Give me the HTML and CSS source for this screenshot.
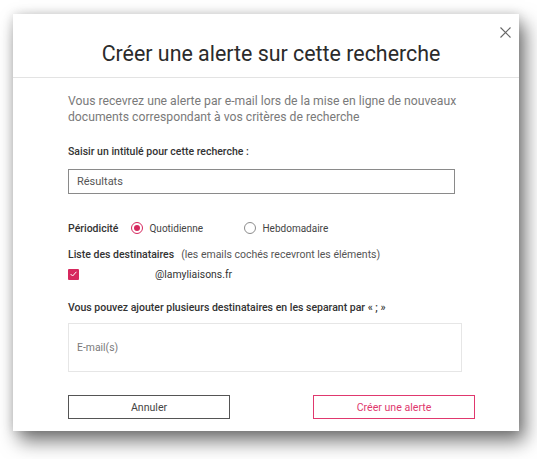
FILE: index.html
```html
<!DOCTYPE html>
<html lang="fr">
<head>
<meta charset="utf-8">
<link rel="stylesheet" href="styles.css">
</head>
<body>
<div class="page">
  <div class="dialog">
    <div class="header">
      <h1 class="title">Créer une alerte sur cette recherche</h1>
      <button class="close" aria-label="Fermer">
        <svg width="11" height="11" viewBox="0 0 11 11"><path d="M0.5 0.5 L10.5 10.5 M10.5 0.5 L0.5 10.5" stroke="#666" stroke-width="1.1" fill="none"/></svg>
      </button>
    </div>
    <div class="body">
      <p class="desc">Vous recevrez une alerte par e-mail lors de la mise en ligne de nouveaux documents correspondant à vos critères de recherche</p>
      <div class="label label-title">Saisir un intitulé pour cette recherche :</div>
      <div class="input">Résultats</div>
      <div class="row period">
        <span class="label">Périodicité</span>
        <span class="radio checked"><span class="dot"></span></span>
        <span class="opt opt-first">Quotidienne</span>
        <span class="radio"></span>
        <span class="opt">Hebdomadaire</span>
      </div>
      <div class="row dest">
        <span class="label">Liste des destinataires</span>
        <span class="hint">(les emails cochés recevront les éléments)</span>
      </div>
      <div class="row mail">
        <span class="check">
          <svg width="7" height="6" viewBox="0 0 7 6"><path d="M0.6 3 L2.6 5 L6.4 0.8" stroke="#fff" stroke-width="1" fill="none"/></svg>
        </span>
        <span class="redact"></span>
        <span class="addr">@lamyliaisons.fr</span>
      </div>
      <div class="label label-add">Vous pouvez ajouter plusieurs destinataires en les separant par « ; »</div>
      <div class="textarea">E-mail(s)</div>
      <div class="actions">
        <button class="btn btn-cancel">Annuler</button>
        <button class="btn btn-create">Créer une alerte</button>
      </div>
    </div>
  </div>
</div>
</body>
</html>
```
FILE: styles.css
```css
* { box-sizing: border-box; }
html, body { margin: 0; padding: 0; background: #fff; }
html, body { min-height: 459px; }
body { font-family: Roboto, "Noto Sans", Arial, sans-serif; color: #333; }
.page { padding: 14px 18px 28px 13px; min-height: 459px; }
.dialog {
  width: 506px;
  height: 417px;
  background: #fff;
  box-shadow: 6px 10px 18px rgba(0,0,0,0.55), 0 0 10px rgba(0,0,0,0.14);
  position: relative;
}
.header {
  height: 64px;
  border-bottom: 1px solid #e3e3e3;
  display: flex;
  align-items: center;
  justify-content: center;
  padding-top: 15px;
  padding-left: 10px;
}
.title {
  margin: 0;
  font-size: 21.4px;
  font-weight: 400;
  color: #2b2b2b;
}
.close {
  position: absolute;
  top: 13px;
  right: 8px;
  border: 0;
  background: none;
  padding: 0;
  width: 11px;
  height: 11px;
  display: block;
}
.close svg { display: block; }
.body { padding: 15px 44px 0 55px; }
.desc {
  margin: 0;
  font-size: 12.2px;
  line-height: 16px;
  color: #7a7a7a;
}
.label { font-size: 10.5px; font-weight: 500; color: #333; }
.label-title { margin-top: 20px; line-height: 14px; }
.input {
  margin-top: 10px;
  width: 387px;
  height: 25px;
  border: 1px solid #8a8a8a;
  font-size: 11px;
  color: #555;
  padding: 0 8px;
  display: flex;
  align-items: center;
}
.row { display: flex; align-items: center; }
.period { margin-top: 27px; height: 14px; }
.radio {
  width: 12px; height: 12px;
  border: 1px solid #8c8c8c;
  border-radius: 50%;
  display: inline-flex;
  align-items: center;
  justify-content: center;
}
.period .label + .radio { margin-left: 13px; }
.radio.checked { border-color: #d6285e; }
.radio .dot { width: 6px; height: 6px; border-radius: 50%; background: #d6285e; }
.opt { font-size: 10px; color: #444; margin-left: 6px; }
.opt-first { width: 95px; }
.dest { margin-top: 12px; height: 14px; }
.hint { font-size: 10.5px; color: #555; margin-left: 7px; }
.mail { margin-top: 7px; height: 12px; }
.check {
  width: 11px; height: 11px;
  background: #d6285e;
  display: inline-flex; align-items: center; justify-content: center;
  border-radius: 1px;
}
.redact { width: 76px; height: 12px; background: #fff; }
.addr {
  font-size: 10.4px; color: #333;
}
.label-add { margin-top: 21px; line-height: 14px; }
.textarea {
  margin-top: 8px;
  width: 394px;
  height: 49px;
  border: 1px solid #e6e6e6;
  font-size: 10.4px;
  color: #7a7a7a;
  padding: 0 8px;
  display: flex;
  align-items: center;
}
.actions {
  margin-top: 23px;
  display: flex;
  justify-content: space-between;
  width: 407px;
}
.btn {
  width: 162px;
  height: 24px;
  background: #fff;
  font-family: Roboto, "Noto Sans", Arial, sans-serif;
  font-size: 10.6px;
  padding: 0;
}
.btn-cancel { border: 1px solid #555; color: #444; }
.btn-create { border: 1px solid #e0386e; color: #e0386e; }
```
